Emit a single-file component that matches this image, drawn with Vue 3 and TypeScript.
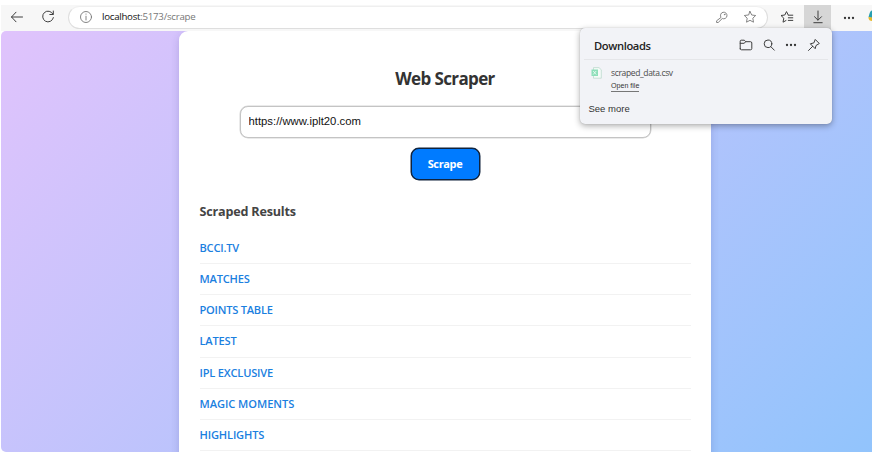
<script setup lang="ts">
import { ref } from 'vue'

interface ResultLink {
  label: string
  spacing: string
}

const url = ref<string>('https://www.iplt20.com')
const results: ResultLink[] = [
  { label: 'BCCI.TV', spacing: '-0.2px' },
  { label: 'MATCHES', spacing: '-0.2px' },
  { label: 'POINTS TABLE', spacing: '-0.24px' },
  { label: 'LATEST', spacing: '-0.2px' },
  { label: 'IPL EXCLUSIVE', spacing: '-0.2px' },
  { label: 'MAGIC MOMENTS', spacing: '-0.05px' },
  { label: 'HIGHLIGHTS', spacing: '-0.15px' },
]
</script>

<template>
  <div class="window">
    <header class="toolbar">
      <svg class="icon back" viewBox="0 0 14 14"><path d="M12.5 7H1.5M6 2.2 1.5 7 6 11.8" /></svg>
      <svg class="icon reload" viewBox="0 0 14 14"><path d="M12 4.2A5.4 5.4 0 1 0 12.4 7.6M12.3 1V4.5H8.8" /></svg>
      <div class="address">
        <svg class="icon info" viewBox="0 0 14 14"><circle cx="7" cy="7" r="5.5" /><path d="M7 6.2V10M7 4V4.2" /></svg>
        <span class="location"><b>localhost</b>:5173/scrape</span>
        <svg class="icon key" viewBox="0 0 14 14"><path d="M5.8 7.1A3.3 3.3 0 1 1 7.3 8.5L3.2 12.5H1.6V11.2Z" /><circle cx="9.6" cy="4.6" r=".3" /></svg>
        <svg class="icon star" viewBox="0 0 14 14"><path d="M7 1.4 8.7 5 12.7 5.5 9.8 8.2 10.5 12.2 7 10.3 3.5 12.2 4.2 8.2 1.3 5.5 5.3 5Z" /></svg>
      </div>
      <svg class="icon favorites" viewBox="0 0 14 14"><path d="M8 4.6 6.5 1.6 4.8 5 1 5.5 3.8 8.2 3 12.2 6 10.5M8.3 5.2H12.8M8.3 7.8H12.8M8.3 10.4H12.8" /></svg>
      <div class="download-button">
        <svg class="icon" viewBox="0 0 14 14"><path d="M7 1V10M3.5 6.7 7 10.2 10.5 6.7M2.8 12.7H11.2" /></svg>
      </div>
      <svg class="icon dots menu" viewBox="0 0 14 14"><circle cx="3" cy="7" r="1.15" /><circle cx="7" cy="7" r="1.15" /><circle cx="11" cy="7" r="1.15" /></svg>
      <svg class="copilot" viewBox="0 0 4 12"><path d="M4 .5C1.8 1 1.6 4 .5 7L4 8Z" fill="#289fb1" /><path d="M.4 7C.5 10 2 11 4 11V7.5Z" fill="#e6b92d" /></svg>
    </header>

    <div class="viewport">
      <main class="card">
        <h1>Web Scraper</h1>
        <input v-model="url" class="url" type="text" />
        <button class="scrape" type="button"><span>Scrape</span></button>
        <h2><span>Scraped Results</span></h2>
        <ul class="results">
          <li v-for="item in results" :key="item.label">
            <a :style="{ letterSpacing: item.spacing }">{{ item.label }}</a>
          </li>
        </ul>
      </main>
    </div>

    <aside class="downloads">
      <div class="head">
        <strong>Downloads</strong>
        <svg class="icon" viewBox="0 0 14 14"><path d="M1.2 11V3.2Q1.2 2.2 2.2 2.2H5.3L6.8 3.7H11.5Q12.8 3.7 12.8 5V10.5Q12.8 11.8 11.5 11.8H2.5Q1.2 11.8 1.2 10.5M1.2 5.3H5L6.8 3.7" /></svg>
        <svg class="icon" viewBox="0 0 14 14"><circle cx="6" cy="5.8" r="3.8" /><path d="M8.8 8.6 12.3 12.2" /></svg>
        <svg class="icon dots" viewBox="0 0 14 14"><circle cx="3" cy="7" r="1.15" /><circle cx="7" cy="7" r="1.15" /><circle cx="11" cy="7" r="1.15" /></svg>
        <svg class="icon" viewBox="0 0 14 14"><path d="M8.5 1.7 12.3 5.5 9 7.5 8.2 10.7 3.3 5.8 6.5 5ZM5.7 8.3 1.5 12.5" /></svg>
      </div>
      <div class="file">
        <svg class="csv" viewBox="0 0 11 12"><path d="M2.5.6H8L10.3 2.8V11.2H2.5Z" fill="#f5fbf8" stroke="#b5d5c8" stroke-width=".7" /><rect x=".5" y="2.5" width="6.5" height="6.5" fill="#8edfba" /><path d="M2.2 4 5.2 7.5M5.2 4 2.2 7.5" stroke="#f4fff9" stroke-width=".8" /></svg>
        <div class="details">
          <span class="name">scraped_data.csv</span>
          <a class="open">Open file</a>
        </div>
      </div>
      <a class="more">See more</a>
    </aside>
  </div>
</template>

<style>
body {
  margin: 0;
  background: #fff;
  overflow: hidden;
}
</style>

<style scoped>
* {
  box-sizing: border-box;
}
.window {
  position: relative;
  width: 872px;
  height: 455px;
  padding: 5px 0 3px 1px;
  display: flex;
  flex-direction: column;
  font-family: "Open Sans", "Noto Sans", sans-serif;
}
.icon {
  width: 14px;
  height: 14px;
  flex: none;
  fill: none;
  stroke: #3e3e3e;
  stroke-width: 1;
  stroke-linecap: round;
  stroke-linejoin: round;
}
.dots {
  fill: #333;
  stroke: none;
}
.toolbar {
  height: 26px;
  flex: none;
  display: flex;
  align-items: center;
  background: #f7f7f7;
  overflow: hidden;
}
.back {
  margin: 0 0 2px 9px;
}
.reload {
  margin: 0 0 2px 17px;
}
.address {
  width: 700px;
  height: 23px;
  margin: 0 0 2px 13px;
  padding: 0 10px;
  display: flex;
  align-items: center;
  background: #fff;
  border: 1px solid #dedede;
  border-top-color: #efefef;
  border-radius: 12px;
}
.address .icon {
  stroke: #777;
  stroke-width: 0.9;
}
.location {
  margin-left: 9px;
  flex: 1;
  font-size: 9.7px;
  line-height: 20px;
  letter-spacing: -0.26px;
  color: #777;
}
.location b {
  font-weight: 400;
  color: #111;
}
.star {
  margin-left: 14px;
}
.favorites {
  margin: 0 0 2px 12px;
}
.download-button {
  width: 27px;
  height: 26px;
  margin-left: 10px;
  padding-bottom: 2px;
  display: flex;
  align-items: center;
  justify-content: center;
  background: #d6d6d6;
}
.menu {
  margin: 0 0 0 11px;
}
.copilot {
  width: 4px;
  height: 12px;
  margin: 0 0 4px auto;
}
.viewport {
  height: 421px;
  flex: none;
  display: flex;
  padding-left: 178px;
  background: linear-gradient(135deg, #e0c3fc 0%, #92c4fc 100%);
  border-radius: 5px 0 0 5px;
  overflow: hidden;
}
.card {
  width: 532px;
  height: 460px;
  padding: 35px 20.5px 0;
  display: flex;
  flex-direction: column;
  align-items: center;
  background: #fff;
  border-radius: 9px;
  box-shadow: 0 3px 9px rgba(50, 50, 130, 0.2);
}
h1 {
  margin: 0;
  font-size: 17px;
  font-weight: 700;
  line-height: 26px;
  letter-spacing: -0.62px;
  color: #333;
}
.url {
  width: 411px;
  height: 32px;
  margin-top: 13.5px;
  padding: 0 8px 1px;
  border: 1px solid #c4c4c4;
  border-radius: 8px;
  background: #fff;
  box-shadow: 0 0 0 0.5px #d5d5d5;
  font: 11.3px "Liberation Sans", sans-serif;
  color: #111;
  outline: none;
}
.scrape {
  width: 69px;
  height: 32px;
  margin-top: 10px;
  padding: 0 0 1px;
  border: 1px solid #10233c;
  border-radius: 8px;
  background: #007bff;
  box-shadow: 0 0 0 0.5px #10233c;
  color: #fff;
  font: 700 11px "Open Sans", "Noto Sans", sans-serif;
  letter-spacing: -0.35px;
}
h2 {
  align-self: flex-start;
  margin: 23.5px 0 0;
  font-size: 12.6px;
  font-weight: 700;
  line-height: 18px;
  letter-spacing: -0.2px;
  color: #444;
}
.results {
  align-self: stretch;
  margin: 11.5px 0 0;
  padding: 0;
  list-style: none;
}
.results li {
  height: 31.25px;
  display: flex;
  align-items: center;
  border-bottom: 1px solid #f2f2f2;
}
.results a {
  font-size: 11.1px;
  font-weight: 600;
  line-height: 16px;
  color: #1b80df;
}
.downloads {
  position: absolute;
  left: 580px;
  top: 28px;
  width: 252px;
  height: 96px;
  border-radius: 5px;
  background: #f2f3f7;
  box-shadow: 0 2px 6px rgba(0, 0, 0, 0.32), 0 0 1px rgba(0, 0, 0, 0.25);
}
.head {
  height: 32px;
  margin: 0 4px;
  padding: 3px 7px 0 10px;
  display: flex;
  align-items: center;
  gap: 8.6px;
  border-bottom: 1px solid #e5e6e9;
}
.head strong {
  flex: 1;
  font-size: 11.2px;
  font-weight: 600;
  letter-spacing: -0.4px;
  color: #222;
}
.file {
  padding: 5px 0 0 11px;
  display: flex;
  align-items: flex-start;
}
.csv {
  width: 11px;
  height: 12px;
  margin-top: 2px;
}
.details {
  margin-left: 9px;
  display: flex;
  flex-direction: column;
  align-items: flex-start;
}
.name {
  font-size: 8.5px;
  line-height: 16px;
  letter-spacing: -0.36px;
  color: #4a4a4a;
}
.open {
  font: 7.1px/10px "Liberation Sans", sans-serif;
  color: #333;
  border-bottom: 1px solid #777;
}
.more {
  display: block;
  margin: 10px 0 0 8.5px;
  font: 9.5px/14px "Liberation Sans", sans-serif;
  color: #333;
}
</style>
